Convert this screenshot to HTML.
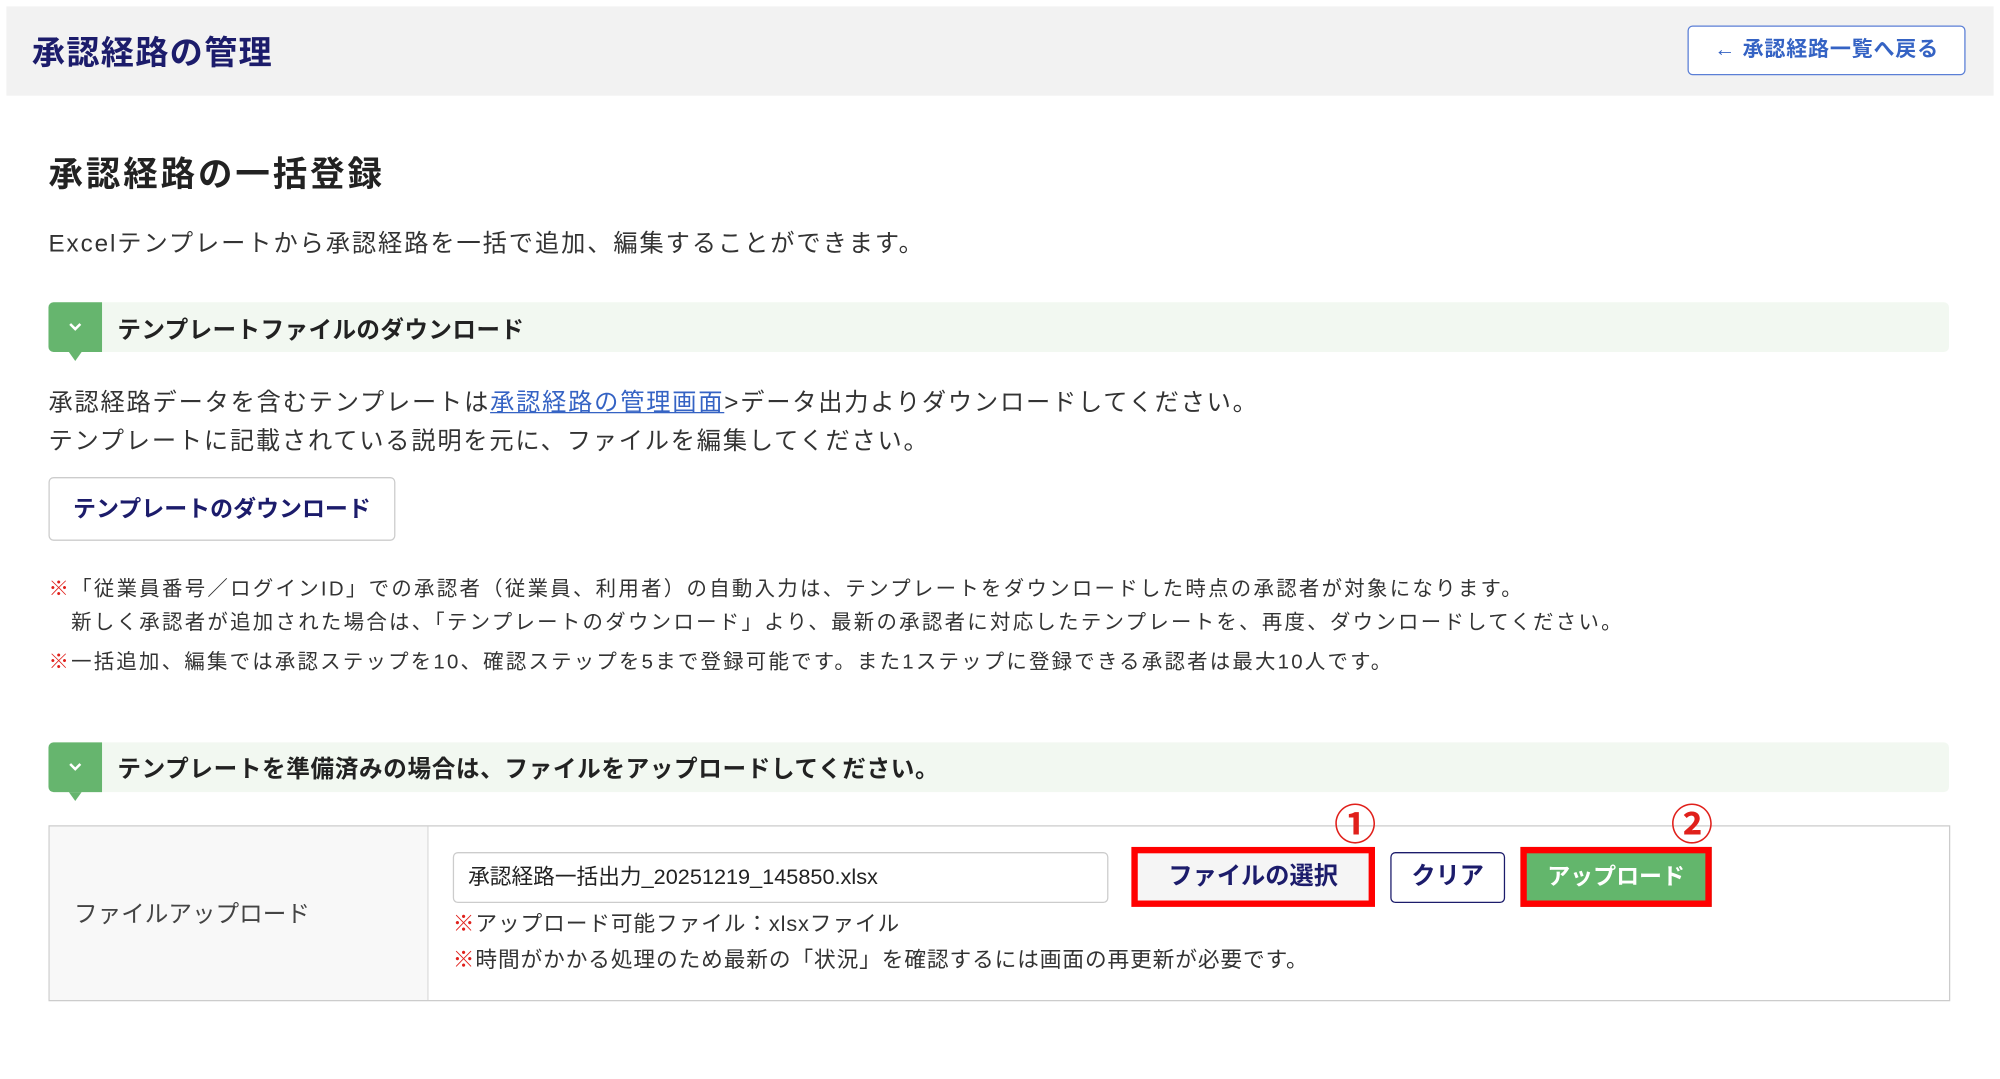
<!DOCTYPE html>
<html><head><meta charset="utf-8"><style>
html,body{margin:0;padding:0;background:#fff;width:2000px;height:1079px;overflow:hidden}
#w{position:absolute;left:0;top:0;width:1568px;height:846px;transform:scale(1.27551);transform-origin:0 0;font-family:"Liberation Sans","Noto Sans CJK JP",sans-serif;color:#333}
.a{position:absolute;white-space:nowrap}
.hd{left:5px;top:5px;width:1558px;height:70px;background:#f2f2f2}
.bar{left:38px;width:1490px;height:39px;background:#f2f8f1;border-radius:4px}
.tab{position:absolute;left:0;top:0;width:42px;height:39px;background:#66b56e;border-radius:4px 0 0 4px}
.tab:after{content:"";position:absolute;left:16px;top:39px;border:5px solid transparent;border-top:7px solid #66b56e}
.tab svg{position:absolute;left:15px;top:14px}
.bt{position:absolute;font-weight:bold;font-size:18.5px;color:#222;left:54px;top:8px}
.r{color:#e0201b}
</style></head><body><div id="w">
<div class="a hd"></div>
<div class="a" style="left:25px;top:21px;font-size:26px;font-weight:bold;color:#1c1c6b;letter-spacing:1px">承認経路の管理</div>
<div class="a" style="left:1323px;top:20px;width:218px;height:39px;background:#fff;border:1px solid #5b7fd6;border-radius:4px;box-sizing:border-box;font-size:16.5px;font-weight:bold;color:#3563c4;line-height:37px;text-align:center;letter-spacing:0.6px">← 承認経路一覧へ戻る</div>
<div class="a" style="left:38px;top:115px;font-size:27px;font-weight:bold;color:#222;letter-spacing:2.3px">承認経路の一括登録</div>
<div class="a" style="left:38px;top:176px;font-size:19px;letter-spacing:1.5px">Excelテンプレートから承認経路を一括で追加、編集することができます。</div>
<div class="a bar" style="top:237px"><div class="tab"><svg width="12" height="10" viewBox="0 0 12 10"><path d="M2 3l4 4 4-4" stroke="#fff" stroke-width="2" fill="none"/></svg></div><div class="bt" style="letter-spacing:0.3px">テンプレートファイルのダウンロード</div></div>
<div class="a" style="left:38px;top:302px;font-size:19px;line-height:30px;letter-spacing:1.4px">承認経路データを含むテンプレートは<span style="color:#3563c4;text-decoration:underline">承認経路の管理画面</span>&gt;データ出力よりダウンロードしてください。<br>テンプレートに記載されている説明を元に、ファイルを編集してください。</div>
<div class="a" style="left:38px;top:374px;width:272px;height:50px;border:1px solid #ccc;border-radius:4px;box-sizing:border-box;text-align:center;line-height:48px;font-size:18px;font-weight:bold;color:#1c1c6b">テンプレートのダウンロード</div>
<div class="a" style="left:38px;top:450px;font-size:16px;line-height:26px;letter-spacing:1.8px"><span class="r">※</span>「従業員番号／ログインID」での承認者（従業員、利用者）の自動入力は、テンプレートをダウンロードした時点の承認者が対象になります。<br>　新しく承認者が追加された場合は、「テンプレートのダウンロード」より、最新の承認者に対応したテンプレートを、再度、ダウンロードしてください。</div>
<div class="a" style="left:38px;top:505px;font-size:16px;letter-spacing:1.75px"><span class="r">※</span>一括追加、編集では承認ステップを10、確認ステップを5まで登録可能です。また1ステップに登録できる承認者は最大10人です。</div>
<div class="a bar" style="top:582px"><div class="tab"><svg width="12" height="10" viewBox="0 0 12 10"><path d="M2 3l4 4 4-4" stroke="#fff" stroke-width="2" fill="none"/></svg></div><div class="bt" style="letter-spacing:0.5px;top:7px">テンプレートを準備済みの場合は、ファイルをアップロードしてください。</div></div>
<div class="a" style="left:38px;top:647px;width:1491px;height:138px;border:1px solid #ccc;box-sizing:border-box"></div>
<div class="a" style="left:39px;top:648px;width:296px;height:136px;background:#f8f8f8;border-right:1px solid #ddd"></div>
<div class="a" style="left:58px;top:703px;font-size:18.5px;color:#444">ファイルアップロード</div>
<div class="a" style="left:355px;top:668px;width:514px;height:40px;border:1px solid #ccc;border-radius:4px;box-sizing:border-box;font-size:17px;line-height:38px;padding-left:11px;color:#222">承認経路一括出力_20251219_145850.xlsx</div>
<div class="a" style="left:887px;top:664px;width:191px;height:47px;border:5px solid #f00;box-sizing:border-box;background:#f5f5f5;text-align:center;line-height:37px;font-size:19px;font-weight:bold;color:#1c1c6b">ファイルの選択</div>
<div class="a" style="left:1090px;top:668px;width:90px;height:40px;border:1px solid #1c1c6b;border-radius:4px;box-sizing:border-box;text-align:center;line-height:38px;font-size:19px;font-weight:bold;color:#1c1c6b">クリア</div>
<div class="a" style="left:1192px;top:664px;width:150px;height:47px;border:5px solid #f00;box-sizing:border-box;background:#63b66c;text-align:center;line-height:37px;font-size:18px;font-weight:bold;color:#fff">アップロード</div>
<div class="a r" style="left:1046px;top:620px;font-size:33px;font-weight:bold">①</div>
<div class="a r" style="left:1310px;top:620px;font-size:33px;font-weight:bold">②</div>
<div class="a" style="left:355px;top:711px;font-size:17px;line-height:28px;letter-spacing:0.7px"><span class="r">※</span>アップロード可能ファイル：xlsxファイル<br><span class="r">※</span>時間がかかる処理のため最新の「状況」を確認するには画面の再更新が必要です。</div>
</div></body></html>
